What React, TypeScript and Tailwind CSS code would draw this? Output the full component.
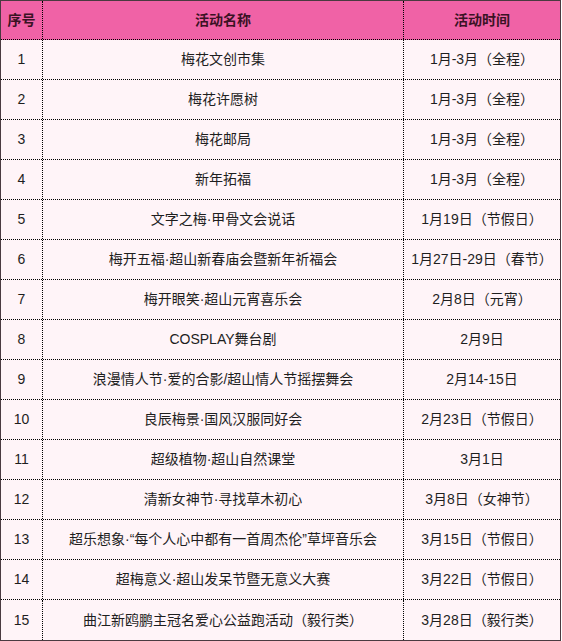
import React from 'react';

const rows: [string, string][] = [
  ['梅花文创市集', '1月-3月（全程）'],
  ['梅花许愿树', '1月-3月（全程）'],
  ['梅花邮局', '1月-3月（全程）'],
  ['新年拓福', '1月-3月（全程）'],
  ['文字之梅·甲骨文会说话', '1月19日（节假日）'],
  ['梅开五福·超山新春庙会暨新年祈福会', '1月27日-29日（春节）'],
  ['梅开眼笑·超山元宵喜乐会', '2月8日（元宵）'],
  ['COSPLAY舞台剧', '2月9日'],
  ['浪漫情人节·爱的合影/超山情人节摇摆舞会', '2月14-15日'],
  ['良辰梅景·国风汉服同好会', '2月23日（节假日）'],
  ['超级植物·超山自然课堂', '3月1日'],
  ['清新女神节·寻找草木初心', '3月8日（女神节）'],
  ['超乐想象·“每个人心中都有一首周杰伦”草坪音乐会', '3月15日（节假日）'],
  ['超梅意义·超山发呆节暨无意义大赛', '3月22日（节假日）'],
  ['曲江新鸥鹏主冠名爱心公益跑活动（毅行类）', '3月28日（毅行类）'],
];

const cell = 'flex items-center justify-center border-r border-dotted border-black';

export default function App() {
  return (
    <div
      className="w-[561px] border border-[#4a3a40] bg-white text-[14px] text-[#1e1e1e]"
      style={{ fontFamily: '"Liberation Sans", "Noto Sans CJK SC", sans-serif' }}
    >
      <div className="grid h-[39px] grid-cols-[42px_361px_1fr] border-b border-dotted border-black bg-[#f062a6] font-bold text-[#3a1224]">
        <div className={cell}>序号</div>
        <div className={cell}>活动名称</div>
        <div className="flex items-center justify-center">活动时间</div>
      </div>
      {rows.map(([name, time], i) => (
        <div
          key={i}
          className={`grid h-[40px] grid-cols-[42px_361px_1fr] bg-[#fff4f8] ${
            i < rows.length - 1 ? 'border-b border-dotted border-black' : ''
          }`}
        >
          <div className={cell}>{i + 1}</div>
          <div className={cell}>{name}</div>
          <div className="flex items-center justify-center">{time}</div>
        </div>
      ))}
    </div>
  );
}
